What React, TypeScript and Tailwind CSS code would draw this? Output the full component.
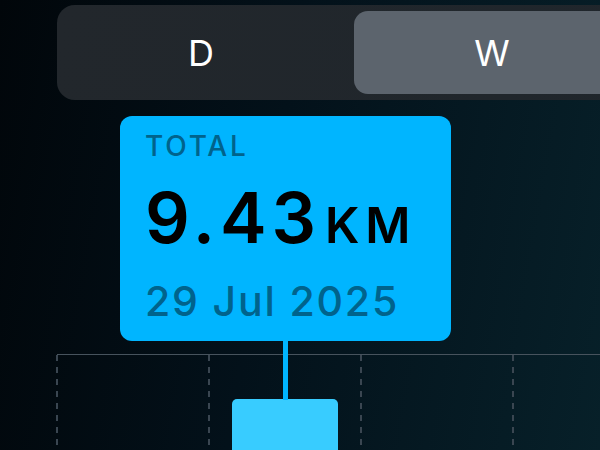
import React from 'react';

const segments = ['D', 'W'];
const columns = [0, 1, 2, 3];

export default function App() {
  const selected = 1;

  return (
    <div
      className="relative w-[600px] h-[450px] overflow-hidden bg-[linear-gradient(100deg,#01060a_0%,#03111a_45%,#072029_100%)]"
      style={{ fontFamily: 'Inter, "Noto Sans", sans-serif' }}
    >
      {/* Period picker */}
      <div className="ml-[57px] mt-[5px] flex h-[95px] w-[900px] gap-[15px] rounded-[18px] bg-[linear-gradient(100deg,#22272c,#1e252b)] p-[6px]">
        {segments.map((s, i) => (
          <div
            key={s}
            className={`flex w-[276px] shrink-0 items-center justify-center rounded-[14px] text-[36px] leading-none text-white ${
              i === selected ? 'bg-[#5c646d]' : ''
            }`}
          >
            {s}
          </div>
        ))}
      </div>

      {/* Chart */}
      <div className="ml-[57px] mt-[254px] flex h-[96px] border-t border-[#47535d]">
        {columns.map((c) => (
          <div key={c} className="relative w-[152px] shrink-0">
            <div className="absolute -left-px top-0 bottom-0 w-[2px] bg-[repeating-linear-gradient(to_bottom,#3a4651_0_6px,transparent_6px_12px)]" />
            {c === 1 && (
              <div className="mx-auto mt-[44px] h-[60px] w-[106px] rounded-t-[5px] bg-[#38ccff]" />
            )}
          </div>
        ))}
      </div>

      {/* Connector */}
      <div className="absolute left-[283px] top-[340px] h-[60px] w-[5px] bg-[#00b5ff]" />

      {/* Tooltip */}
      <div className="absolute left-[120px] top-[116px] flex h-[225px] w-[331px] flex-col rounded-[12px] bg-[#00b5ff] pl-[25px] pt-[16px]">
        <div className="text-[28px] font-medium leading-none tracking-[0.1em] text-[#00638c]">TOTAL</div>
        <div className="mt-[23px] flex items-baseline text-[70px] font-semibold leading-none tracking-[0.07em] text-black">
          9.43<span className="ml-[4px] text-[49px] tracking-[0.12em]">KM</span>
        </div>
        <div className="mt-[28px] text-[41px] font-medium leading-none tracking-[0.045em] text-[#00638c]">29 Jul 2025</div>
      </div>
    </div>
  );
}
